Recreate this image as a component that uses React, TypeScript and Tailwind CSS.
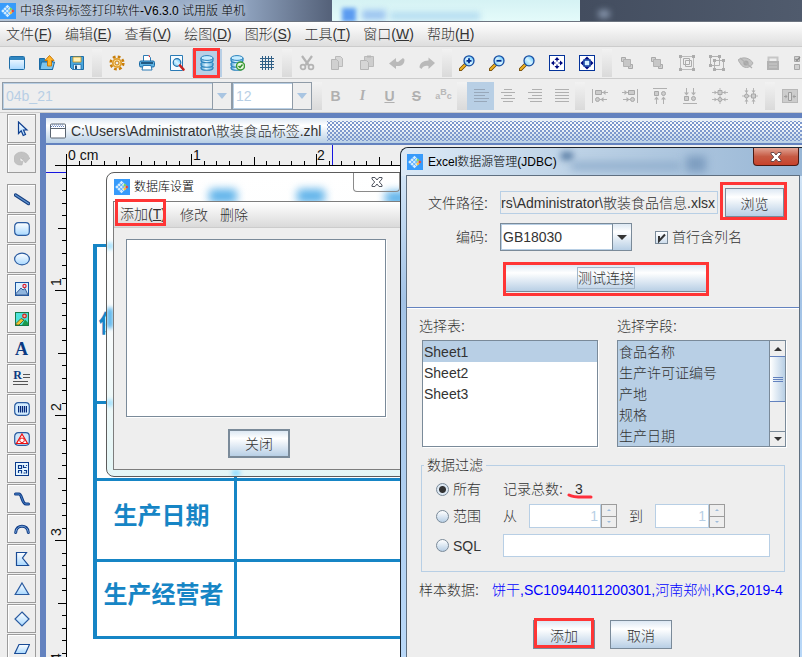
import React from 'react';
import clsx from 'clsx';

type IconProps = { children: React.ReactNode; className?: string };

const Icon = ({ children, className = 'h-4 w-4' }: IconProps) => (
  <svg viewBox="0 0 16 16" className={clsx('shrink-0', className)} fill="none" aria-hidden="true">
    {children}
  </svg>
);

const AppLogo = () => (
  <svg viewBox="0 0 16 16" className="h-4 w-4 shrink-0" aria-hidden="true">
    <rect width="16" height="16" fill="#379bfb" />
    <path d="M7.500 1.700 13.800 8l-6.300 6.300L1.200 8z" fill="#d6eeff" />
    <path
      d="m3.200 6 6.300 6.300M5.300 3.900l6.300 6.300M3.200 10l6.300-6.300M5.300 12.100l6.300-6.300"
      stroke="#379bfb"
      strokeWidth=".8"
    />
    <path d="m10.800 4.600 1.600 1.600-1.600 1.600-1.600-1.600z" fill="#7ed957" />
    <path d="m12.700 6.300 1.700 1.700-1.700 1.700L11 8z" fill="#e2453c" />
    <path d="m10.800 8.200 1.600 1.600-1.600 1.600-1.600-1.600z" fill="#ffc02e" />
  </svg>
);

const Defs = () => (
  <svg className="absolute h-0 w-0" aria-hidden="true">
    <defs>
      <linearGradient id="sky" x1="0" y1="0" x2="0" y2="1">
        <stop offset="0" stopColor="#ffffff" />
        <stop offset="1" stopColor="#a8d8ff" />
      </linearGradient>
      <linearGradient id="lens" x1="1" y1="0" x2="0" y2="1">
        <stop offset="0" stopColor="#37b6ff" />
        <stop offset=".5" stopColor="#d9f4ff" />
        <stop offset="1" stopColor="#58c0f5" />
      </linearGradient>
      <linearGradient id="disk" x1="0" y1="0" x2="1" y2="0">
        <stop offset="0" stopColor="#4a9ed2" />
        <stop offset=".4" stopColor="#e4f6ff" />
        <stop offset="1" stopColor="#5aaede" />
      </linearGradient>
    </defs>
  </svg>
);

const Cylinder = () => (
  <>
    <path d="M2 3v10c0 3.300 12 3.300 12 0V3" fill="url(#disk)" />
    <path
      d="M2 3v2.500c0 3 12 3 12 0V3M2 8v2c0 3 12 3 12 0V8M2 12v1c0 3 12 3 12 0v-1"
      stroke="#2a82bc"
      strokeWidth="1.200"
    />
    <ellipse cx="8" cy="3" rx="6" ry="2.400" fill="#c6ecff" stroke="#2a82bc" />
  </>
);

const Magnifier = ({ children }: { children?: React.ReactNode }) => (
  <Icon>
    <path d="m6.500 9.500-5 5" stroke="#6b4300" strokeWidth="3.600" strokeLinecap="round" />
    <path d="m6 10-4.300 4.300" stroke="#f0b323" strokeWidth="2" strokeLinecap="round" />
    <circle cx="10" cy="5.800" r="5" fill="url(#lens)" stroke="#1a4fa3" strokeWidth="1.300" />
    {children}
  </Icon>
);

const NewIcon = () => (
  <Icon>
    <rect x=".5" y="1.500" width="15" height="13" rx="1" fill="url(#sky)" stroke="#1f6ea8" />
    <path d="M1 2h14v3H1z" fill="#2f86c0" />
  </Icon>
);
const OpenIcon = () => (
  <Icon>
    <path d="M.5 3.500h5l1 2h7v9H.5z" fill="#2a86c0" stroke="#1a6aa5" />
    <path d="M2.500 7h13l-2 7.500H1z" fill="#7cc4ee" stroke="#1a6aa5" />
    <path d="M10.500.5 15 5.500h-2.500V11h-4V5.500H6z" fill="#ffb52b" stroke="#c97a0a" />
  </Icon>
);
const SaveIcon = () => (
  <Icon>
    <path d="M1.500 1.500h13v13h-11l-2-2z" fill="#4aa6dc" stroke="#1f6ea8" />
    <path d="M4 2h8v5H4z" fill="#fff1b8" stroke="#c9941d" strokeWidth=".8" />
    <path d="M4.500 9.500h7.500v5H4.500z" fill="#eaf6ff" stroke="#1f6ea8" strokeWidth=".8" />
    <path d="M6 10.500h2V14H6z" fill="#1f4e79" />
  </Icon>
);
const GearIcon = () => (
  <Icon>
    <circle cx="8" cy="8" r="6.300" stroke="#c77d0a" strokeWidth="2.600" strokeDasharray="2.700 2.250" />
    <circle cx="8" cy="8" r="4.200" fill="#ffe19a" stroke="#e0a030" strokeWidth="1.800" />
    <circle cx="8" cy="8" r="2" fill="#eee" stroke="#c77d0a" />
  </Icon>
);
const PrintIcon = () => (
  <Icon>
    <path d="M4.500 6V.5h5l2 2V6" fill="#fff" stroke="#2a7ab5" />
    <path d="M9 .5h2v2z" fill="#d22" />
    <rect x=".5" y="6" width="15" height="6" rx="1.500" fill="#5eb2e2" stroke="#1a6aa5" />
    <path d="M2 8h12" stroke="#103e66" strokeWidth="1.500" />
    <path d="M4 10.500h8l1 4.500H3z" fill="#fff" stroke="#2a7ab5" />
  </Icon>
);
const PreviewIcon = () => (
  <Icon>
    <path d="M1.500.5h12v15h-12z" fill="#f4fbff" stroke="#2a7ab5" />
    <circle cx="8" cy="7.500" r="3.800" fill="url(#lens)" stroke="#1f6ea8" strokeWidth="1.200" />
    <path d="m11 10.500 3.500 4" stroke="#c5221f" strokeWidth="2.600" strokeLinecap="round" />
  </Icon>
);
const DatabaseIcon = () => (
  <Icon>
    <Cylinder />
  </Icon>
);
const DatabaseOkIcon = () => (
  <Icon>
    <Cylinder />
    <circle cx="11.500" cy="11" r="4" fill="#e8f8e0" stroke="#3c9b35" strokeWidth="1.500" />
    <path d="m9.500 11 1.500 1.500 2.500-3" stroke="#2c8a27" strokeWidth="1.500" />
  </Icon>
);
const GridIcon = () => (
  <Icon>
    <path d="M3.500 1v14M6.500 1v14M9.500 1v14M12.500 1v14M1 3.500h14M1 6.500h14M1 9.500h14M1 12.500h14" stroke="#2f5f86" />
  </Icon>
);
const CutIcon = () => (
  <Icon>
    <path d="m3 1 6.500 9M13 1 6.500 10" stroke="#b4b4b4" strokeWidth="2.200" />
    <circle cx="4" cy="12" r="2.400" stroke="#b4b4b4" strokeWidth="1.800" />
    <circle cx="12" cy="12" r="2.400" stroke="#b4b4b4" strokeWidth="1.800" />
  </Icon>
);
const CopyIcon = () => (
  <Icon>
    <path d="M6.500 1.500h5l2 2v8h-7z" fill="#d6d6d6" stroke="#bababa" />
    <path d="M2.500 4.500h5l2 2v8h-7z" fill="#d0d0d0" stroke="#b6b6b6" />
  </Icon>
);
const PasteIcon = () => (
  <Icon>
    <path d="M5.500 1.500h9v10h-9z" fill="#cecece" stroke="#bababa" />
    <path d="M8 .5h4v2H8z" fill="#b6b6b6" />
    <path d="M1.500 5.500h6l2 2v7h-8z" fill="#d6d6d6" stroke="#b6b6b6" />
  </Icon>
);
const UndoIcon = () => (
  <Icon>
    <path d="M0 8.500 7 3v3.500l2 .5 5-4 1.500 1.500c0 5-3 7-8.500 6.500V14z" fill="#bababa" />
  </Icon>
);
const RedoIcon = () => (
  <Icon>
    <path d="M16 8 9.500 2.500v3C4 5.500.5 8.500.5 12.500l2 1.500c1.500-3 4-3.500 7-3v3z" fill="#bababa" />
  </Icon>
);
const ZoomInIcon = () => (
  <Magnifier>
    <path d="M7.500 5.800h5M10 3.300v5" stroke="#002a90" strokeWidth="1.800" />
  </Magnifier>
);
const ZoomOutIcon = () => (
  <Magnifier>
    <path d="M7.500 5.800h5" stroke="#002a90" strokeWidth="1.800" />
  </Magnifier>
);
const FitIcon = () => (
  <Icon>
    <rect x=".5" y=".5" width="15" height="15" fill="#fff" stroke="#04339a" />
    <path d="m8 2 2.500 3h-5zM8 14l2.500-3h-5zM2 8l3-2.500v5zM14 8l-3-2.500v5z" fill="#000a80" />
    <path d="M8 4v2.500M8 9.500V12M4 8h2.500M9.500 8H12" stroke="#000a80" strokeWidth="1.200" />
  </Icon>
);
const FitPageIcon = () => (
  <Icon>
    <rect x=".5" y=".5" width="15" height="15" fill="#fff" stroke="#04339a" />
    <path d="m8 1.500 3 3H5zM8 14.500l3-3H5zM1.500 8l3-3v6zM14.500 8l-3-3v6z" fill="#000a80" />
    <rect x="5" y="5" width="6" height="6" fill="#d7f1ff" stroke="#04339a" strokeWidth="1.400" />
  </Icon>
);
const FrontIcon = () => (
  <Icon>
    <path d="M2.500 2.500h4v4h-4zM9.500 9.500h4v4h-4z" fill="#d0d0d0" stroke="#a8a8a8" />
    <path d="M4.500 4.500h7v7h-7z" fill="#c6c6c6" stroke="#b2b2b2" />
  </Icon>
);
const GroupIcon = () => (
  <Icon>
    <path d="M1.500 1.500h13v13h-13z" stroke="#bcbcbc" />
    <path d="M4.500 3.500h6v6h-6zM6.500 5.500h6v6h-6z" fill="#eee" stroke="#acacac" />
    <path d="M0 0h3v3H0zM13 0h3v3h-3zM0 13h3v3H0zM13 13h3v3h-3z" fill="#acacac" />
  </Icon>
);
const UngroupIcon = () => (
  <Icon>
    <path d="M1.500 1.500h9v9h-9z M5.500 5.500h9v9h-9z" stroke="#b2b2b2" />
    <path d="M0 0h3v3H0zM9 0h3v3H9zM0 9h3v3H0zM4 4h3v3H4zM13 4h3v3h-3zM4 13h3v3H4zM13 13h3v3h-3z" fill="#acacac" />
  </Icon>
);
const EyeIcon = () => (
  <Icon>
    <path d="M0 5c5-4 12-2 15 3-3 6-10 6-13 0z" fill="#c4c4c4" stroke="#b0b0b0" />
    <circle cx="8" cy="8" r="2.600" fill="#a8a8a8" />
    <path d="m2 3 12 10" stroke="#b0b0b0" strokeWidth="1.200" />
  </Icon>
);
const LockIcon = () => (
  <Icon>
    <path d="M3.500 7V2.500h9V7" stroke="#c6c6c6" strokeWidth="2" />
    <path d="M2 6h12v9H2z" fill="#b2b2b2" />
    <path d="M4 9h8M4 12h8" stroke="#ccc" />
  </Icon>
);
const CheckListIcon = () => (
  <Icon>
    <path d="M2.500 1.500h5v5h-5zM2.500 9.500h5v5h-5z" fill="#d0d0d0" stroke="#a8a8a8" />
    <path d="m3.500 4 1.500 1.500L8 2" stroke="#888" strokeWidth="1.200" />
  </Icon>
);

type TextIconProps = { letter: string; className?: string };
const TextIcon = ({ letter, className }: TextIconProps) => (
  <span className={clsx('text-sm leading-4 text-[#b0b0b0]', className)}>{letter}</span>
);
const AbcIcon = () => (
  <span className="flex text-[9px] leading-4 font-bold text-[#b8b8b8]">
    <span>a</span>
    <span className="-mt-1">B</span>
    <span>c</span>
  </span>
);

const LinesIcon = ({ d, stroke = '#b0b0b0' }: { d: string; stroke?: string }) => (
  <Icon>
    <path d={d} stroke={stroke} strokeWidth="1.200" />
  </Icon>
);
const AlignLeftIcon = () => <LinesIcon stroke="#98a8ba" d="M1 1.500h11M1 4.500h15M1 7.500h11M1 10.500h15M1 13.500h13" />;
const AlignCenterIcon = () => <LinesIcon d="M4 1.500h8M1 4.500h14M4 7.500h8M1 10.500h14M3 13.500h10" />;
const AlignRightIcon = () => <LinesIcon d="M5 1.500h10M1 4.500h14M5 7.500h10M1 10.500h14M3 13.500h12" />;
const AlignJustifyIcon = () => <LinesIcon d="M1 1.500h14M1 4.500h14M1 7.500h14M1 10.500h14M1 13.500h14" />;

const ObjLeftIcon = () => (
  <Icon>
    <path d="M.5 1v14M10 4.500h6M8 11.500h7" stroke="#b0b0b0" />
    <path d="M3.500 2.500h6v4h-6z" fill="#ccc" stroke="#a8a8a8" />
    <circle cx="5.500" cy="11.500" r="2" fill="#ccc" stroke="#a8a8a8" />
    <path d="m10.500 4.500 3-2.500v5zM8.500 11.500l3-2.500v5z" fill="#b0b0b0" />
  </Icon>
);
const ObjRightIcon = () => (
  <Icon>
    <path d="M15.500 1v14M0 4.500h6M1 11.500h7" stroke="#b0b0b0" />
    <path d="M6.500 2.500h6v4h-6z" fill="#ccc" stroke="#a8a8a8" />
    <circle cx="10.500" cy="11.500" r="2" fill="#ccc" stroke="#a8a8a8" />
    <path d="M5.500 4.500l-3-2.500v5zM7.500 11.500l-3-2.500v5z" fill="#b0b0b0" />
  </Icon>
);
const ObjTopIcon = () => (
  <Icon>
    <path d="M1 .5h14M4.500 10v6M11.500 10v6" stroke="#b0b0b0" />
    <path d="M2.500 3.500h4v4h-4z" fill="#ccc" stroke="#a8a8a8" />
    <circle cx="11.500" cy="5.500" r="2" fill="#ccc" stroke="#a8a8a8" />
    <path d="m4.500 8.500 2.500 3H2zM11.500 8.500l2.500 3H9z" fill="#b0b0b0" />
  </Icon>
);
const ObjBottomIcon = () => (
  <Icon>
    <path d="M1 15.500h14M4.500 0v6M11.500 0v6" stroke="#b0b0b0" />
    <path d="M2.500 8.500h4v4h-4z" fill="#ccc" stroke="#a8a8a8" />
    <circle cx="11.500" cy="10.500" r="2" fill="#ccc" stroke="#a8a8a8" />
    <path d="m4.500 7.500 2.500-3H2zM11.500 7.500l2.500-3H9z" fill="#b0b0b0" />
  </Icon>
);
const ObjMiddleIcon = () => (
  <Icon>
    <path d="M8 0v16M0 4.500h16M0 11.500h16" stroke="#b8b8b8" />
    <path d="M6 2.500h4v4H6z" fill="#ccc" stroke="#a8a8a8" />
    <circle cx="8" cy="11.500" r="2" fill="#ccc" stroke="#a8a8a8" />
    <path d="M5 4.500 2.500 2.500v4zM11 4.500l2.500-2v4zM5 11.500l-2.500-2v4zM11 11.500l2.500-2v4z" fill="#b0b0b0" />
  </Icon>
);
const ObjCenterIcon = () => (
  <Icon>
    <path d="M0 8h16M4.500 0v16M11.500 0v16" stroke="#b8b8b8" />
    <path d="M9.500 6h4v4h-4z" fill="#ccc" stroke="#a8a8a8" />
    <circle cx="4.500" cy="8" r="2" fill="#ccc" stroke="#a8a8a8" />
    <path d="m4.500 5-2-2.500h4zM11.500 5l-2-2.500h4zM4.500 11l-2 2.500h4zM11.500 11l-2 2.500h4z" fill="#b0b0b0" />
  </Icon>
);
const DistributeIcon = () => (
  <Icon>
    <rect x=".5" y="1.500" width="15" height="13" fill="#cdcdcd" stroke="#b8b8b8" />
    <path d="M6.500 4.500h3v8h-3z" fill="#ddd" stroke="#9c9c9c" />
    <path d="M2 8.500h3M11 8.500h3" stroke="#a0a0a0" />
    <path d="m5.500 8.500-2-2v4zM10.500 8.500l2-2v4z" fill="#a0a0a0" />
  </Icon>
);

// left palette

const PointerIcon = () => (
  <Icon>
    <path d="M4.500 1v11.500l2.700-2.700 2 4.700 2.300-1-2-4.500h3.500z" fill="url(#sky)" stroke="#0f3f8f" strokeWidth="1.200" />
  </Icon>
);
const RotateIcon = () => (
  <Icon>
    <path
      d="M0 8a7.500 6.500 0 0 1 15-1h1l-4.500 5L7 7h2.500a2 2 0 0 0-3.500 1.500c0 1.500 1 2 3 2l-1 3.500C3 14.500 0 12 0 8z"
      fill="#c2c2c2"
      stroke="#b6b6b6"
      strokeWidth=".6"
    />
  </Icon>
);
const LineIcon = () => (
  <Icon>
    <path d="m1.500 4 13 8.500" stroke="#173f80" strokeWidth="3.400" strokeLinecap="round" />
    <path d="m1.500 4 13 8.500" stroke="#5f93cf" strokeWidth="1.400" strokeLinecap="round" />
  </Icon>
);
const RoundRectIcon = () => (
  <Icon>
    <rect x=".7" y="1.700" width="14.600" height="12.600" rx="3.500" fill="url(#sky)" stroke="#2a5ba0" strokeWidth="1.200" />
  </Icon>
);
const EllipseIcon = () => (
  <Icon>
    <ellipse cx="8" cy="8" rx="7.400" ry="5.800" fill="url(#sky)" stroke="#2a5ba0" strokeWidth="1.200" />
  </Icon>
);
const PictureIcon = () => (
  <Icon>
    <rect x="1.500" y="1.500" width="13" height="13" fill="#d9efff" stroke="#1a55a0" />
    <path d="M2 12.500 7 7l2 2 2-1.500 3 6.500H2z" fill="#8fb5de" stroke="#3b5f96" />
    <circle cx="10.500" cy="5" r="1.600" stroke="#d23" strokeWidth="1.200" />
  </Icon>
);
const PhotoIcon = () => (
  <Icon>
    <rect x="1.500" y="1.500" width="13" height="13" fill="#4ee3dc" stroke="#157a4a" />
    <path d="m8 14 3-5.500 3 3V14z" fill="#1d9a4a" />
    <path d="M2 12.500 7 7.500l3 1.500-5 5H2z" fill="#f6c231" stroke="#3d5a20" strokeWidth=".8" />
    <circle cx="10.500" cy="5" r="1.800" fill="#ffb09a" stroke="#c22" strokeWidth="1.200" />
  </Icon>
);
const LetterIcon = () => (
  <span className="font-['Liberation_Serif',serif] text-lg leading-4 font-bold text-[#0b3a82]">A</span>
);
const RichTextIcon = () => (
  <span className="flex flex-col">
    <span className="flex items-center gap-px">
      <span className="font-['Liberation_Serif',serif] text-xs leading-[9px] font-bold text-[#0b3a82]">R</span>
      <svg viewBox="0 0 7 8" className="h-2 w-[7px]" aria-hidden="true">
        <path d="M0 2.500h7M0 5.500h7" stroke="#555" />
      </svg>
    </span>
    <svg viewBox="0 0 16 6" className="h-1.5 w-4" aria-hidden="true">
      <path d="M0 1.500h15M0 4.500h15" stroke="#555" />
    </svg>
  </span>
);
const BarcodeIcon = () => (
  <Icon>
    <rect x=".7" y="1.700" width="14.600" height="12.600" rx="3.500" fill="#d3ecff" stroke="#2a5ba0" strokeWidth="1.200" />
    <path d="M4.500 5v6.500M8.500 5v6.500M12.500 5v6.500" stroke="#06287a" />
    <path d="M6.500 5v6.500M10.500 5v6.500" stroke="#06287a" strokeWidth="1.500" />
  </Icon>
);
const WarnShapeIcon = () => (
  <Icon>
    <rect x=".7" y="1.700" width="14.600" height="12.600" rx="3.500" fill="#cfe6fa" stroke="#2a5ba0" strokeWidth="1.200" />
    <path d="m8 3 5.500 9.500h-11z" fill="#fff" stroke="#e11" strokeWidth="1.200" />
    <circle cx="8" cy="9.300" r="2.300" stroke="#e11" />
  </Icon>
);
const QrIcon = () => (
  <Icon>
    <rect x="1.500" y="1.500" width="13" height="13" fill="#e3f4ff" stroke="#0a3a8c" />
    <path
      d="M4.500 4.500h3v3h-3zM4.500 10v2M7 9.500H4M7.500 9v3.500M9.500 4v2.500h3M10 9.500h3M12.500 9v3.500M9.500 12h2M12.500 4v1"
      stroke="#0a3a8c"
      strokeWidth="1.200"
    />
  </Icon>
);
const CurveIcon = () => (
  <Icon>
    <path d="M1.500 3h3.500c3 0 3 10 7 10h2.500" stroke="#0f3a85" strokeWidth="3" strokeLinecap="round" />
    <path d="M1.500 3h3.500c3 0 3 10 7 10h2.500" stroke="#4c86c9" strokeWidth="1" strokeLinecap="round" />
  </Icon>
);
const ArcIcon = () => (
  <Icon>
    <path d="M1.700 11.500C2 3 14 3 14.300 11.500" stroke="#0f3a85" strokeWidth="3" strokeLinecap="round" />
    <path d="M1.700 11.500C2 3 14 3 14.300 11.500" stroke="#7aabdf" strokeWidth="1" strokeLinecap="round" />
  </Icon>
);
const PolygonIcon = () => (
  <Icon>
    <path d="M2.500 1.500h10L8.500 7l6 7.500h-12z" fill="url(#sky)" stroke="#1a4c96" strokeWidth="1.200" />
  </Icon>
);
const TriangleIcon = () => (
  <Icon>
    <path d="m8 2 6.800 11.500H1.200z" fill="url(#sky)" stroke="#2a5ba0" strokeWidth="1.200" />
  </Icon>
);
const DiamondIcon = () => (
  <Icon>
    <path d="m8 1 7 7-7 7-7-7z" fill="url(#sky)" stroke="#2a5ba0" strokeWidth="1.200" />
  </Icon>
);
const ParallelogramIcon = () => (
  <Icon>
    <path d="M5 3.500h10.500l-4 9H.7z" fill="url(#sky)" stroke="#1a4c96" strokeWidth="1.200" />
  </Icon>
);

type Tool = { name: string; icon: React.ReactNode; w?: string; active?: boolean; marked?: boolean };

const fileTools: Tool[] = [
  { name: '新建', icon: <NewIcon /> },
  { name: '打开', icon: <OpenIcon /> },
  { name: '保存', icon: <SaveIcon /> },
];
const outputTools: Tool[] = [
  { name: '文档设置', icon: <GearIcon /> },
  { name: '打印', icon: <PrintIcon /> },
  { name: '打印预览', icon: <PreviewIcon /> },
  { name: '数据库设置', icon: <DatabaseIcon />, active: true, marked: true },
  { name: '刷新数据', icon: <DatabaseOkIcon /> },
  { name: '网格', icon: <GridIcon /> },
];
const editTools: Tool[] = [
  { name: '剪切', icon: <CutIcon /> },
  { name: '复制', icon: <CopyIcon /> },
  { name: '粘贴', icon: <PasteIcon /> },
  { name: '撤销', icon: <UndoIcon /> },
  { name: '重做', icon: <RedoIcon /> },
];
const zoomTools: Tool[] = [
  { name: '放大', icon: <ZoomInIcon /> },
  { name: '缩小', icon: <ZoomOutIcon /> },
  { name: '实际大小', icon: <Magnifier /> },
  { name: '适合窗口', icon: <FitIcon /> },
  { name: '适合页面', icon: <FitPageIcon /> },
];
const arrangeTools: Tool[] = [
  { name: '置前', icon: <FrontIcon /> },
  { name: '置后', icon: <FrontIcon /> },
  { name: '组合', icon: <GroupIcon /> },
  { name: '取消组合', icon: <UngroupIcon /> },
  { name: '隐藏', icon: <EyeIcon />, w: 'w-[27px]' },
  { name: '锁定', icon: <LockIcon />, w: 'w-[27px]' },
  { name: '选择', icon: <CheckListIcon />, w: 'w-[27px]' },
];
const fontTools: Tool[] = [
  { name: '粗体', icon: <TextIcon letter="B" className="font-bold" />, w: 'w-[27px]' },
  { name: '斜体', icon: <TextIcon letter="I" className="font-['Liberation_Serif',serif] font-bold italic" />, w: 'w-[27px]' },
  { name: '下划线', icon: <TextIcon letter="U" className="font-bold underline" />, w: 'w-[27px]' },
  { name: '删除线', icon: <TextIcon letter="S" className="font-bold line-through" />, w: 'w-[27px]' },
  { name: '字符间距', icon: <AbcIcon />, w: 'w-[27px]' },
];
const textAlignTools: Tool[] = [
  { name: '左对齐', icon: <AlignLeftIcon />, w: 'w-[27px]', active: true },
  { name: '居中', icon: <AlignCenterIcon />, w: 'w-[27px]' },
  { name: '右对齐', icon: <AlignRightIcon />, w: 'w-[27px]' },
  { name: '两端对齐', icon: <AlignJustifyIcon />, w: 'w-[27px]' },
];
const objectAlignTools: Tool[] = [
  { name: '左边对齐', icon: <ObjLeftIcon /> },
  { name: '右边对齐', icon: <ObjRightIcon /> },
  { name: '顶部对齐', icon: <ObjTopIcon /> },
  { name: '底部对齐', icon: <ObjBottomIcon /> },
  { name: '水平居中', icon: <ObjMiddleIcon /> },
  { name: '垂直居中', icon: <ObjCenterIcon /> },
];
const distributeTools: Tool[] = [{ name: '等间距', icon: <DistributeIcon /> }];

const selectTools: Tool[] = [
  { name: '选取', icon: <PointerIcon /> },
  { name: '旋转', icon: <RotateIcon /> },
];
const drawTools: Tool[] = [
  { name: '直线', icon: <LineIcon /> },
  { name: '圆角矩形', icon: <RoundRectIcon /> },
  { name: '椭圆', icon: <EllipseIcon /> },
  { name: '图片', icon: <PictureIcon /> },
  { name: '照片', icon: <PhotoIcon /> },
  { name: '普通文本', icon: <LetterIcon /> },
  { name: '富文本', icon: <RichTextIcon /> },
  { name: '一维条码', icon: <BarcodeIcon /> },
  { name: '矢量图', icon: <WarnShapeIcon /> },
  { name: '二维码', icon: <QrIcon /> },
  { name: '曲线', icon: <CurveIcon /> },
  { name: '弧线', icon: <ArcIcon /> },
  { name: '多边形', icon: <PolygonIcon /> },
  { name: '三角形', icon: <TriangleIcon /> },
  { name: '菱形', icon: <DiamondIcon /> },
  { name: '平行四边形', icon: <ParallelogramIcon /> },
];

const ToolGroup = ({ tools }: { tools: Tool[] }) => (
  <div className="flex h-7 shrink-0">
    {tools.map((tool) => (
      <button
        key={tool.name}
        aria-label={tool.name}
        className={clsx(
          'relative flex h-7 items-center justify-center',
          tool.w ?? 'w-[30px]',
          tool.active && 'bg-[#b8cfe5]',
        )}
      >
        {tool.icon}
        {tool.marked && <span className="absolute -inset-y-px right-0.5 left-px border-3 border-[#ff3535]" />}
      </button>
    ))}
  </div>
);

const Separator = () => <div className="h-7 w-2.5 shrink-0 bg-linear-to-b from-[#f2f2f2] to-[#dadada]" />;

const menus = [
  ['文件', 'F'],
  ['编辑', 'E'],
  ['查看', 'V'],
  ['绘图', 'D'],
  ['图形', 'S'],
  ['工具', 'T'],
  ['窗口', 'W'],
  ['帮助', 'H'],
];

const DisabledCombo = ({ label, value, className }: { label: string; value: string; className: string }) => (
  <div className={clsx('relative h-7 shrink-0 border border-[#8f9ba7]', className)}>
    <select
      aria-label={label}
      disabled
      className="h-full w-full appearance-none border border-[#b8cfe5] bg-transparent px-0.5 text-sm text-[#b8cfe5] disabled:opacity-100"
    >
      <option>{value}</option>
    </select>
    <span className="pointer-events-none absolute inset-y-0 right-0 flex w-[19px] items-center justify-center border-l border-[#8f9ba7] bg-[#eeeeee]">
      <svg viewBox="0 0 10 6" className="h-1.5 w-2.5" aria-hidden="true">
        <path d="M0 0h10L5 6z" fill="#a9c5e2" />
      </svg>
    </span>
  </div>
);

const PaletteButton = ({ tool }: { tool: Tool }) => (
  <button
    aria-label={tool.name}
    className="flex h-[29px] w-[29px] shrink-0 items-center justify-center border border-[#9c9c9c] shadow-[inset_1px_1px_0_#fff]"
  >
    {tool.icon}
  </button>
);

const tickLength = (i: number) => (i % 10 === 0 ? 11 : i % 5 === 0 ? 8 : 4);

const HorizontalRuler = () => (
  <svg className="block h-[21px] w-full shrink-0" shapeRendering="crispEdges" aria-hidden="true">
    {Array.from({ length: 60 }, (_, i) => {
      const x = Math.round(i * 12.5) + 20.5;
      return <path key={i} d={`M${x} 20V${20 - tickLength(i)}`} stroke="#000" />;
    })}
    <path d="M9 20.500h900" stroke="#000" />
    <path d="M286.500 0v20" stroke="#1515e0" />
    <text x="22" y="15" fontSize="14" fill="#111">0 cm</text>
    <text x="147" y="15" fontSize="14" fill="#111">1</text>
    <text x="271" y="15" fontSize="14" fill="#111">2</text>
  </svg>
);

const VerticalRuler = () => (
  <svg className="block h-full w-[21px] shrink-0" shapeRendering="crispEdges" aria-hidden="true">
    {Array.from({ length: 50 }, (_, i) => {
      const y = Math.round(i * 12.5) - 0.5;
      return <path key={i} d={`M20 ${y}h${-tickLength(i)}`} stroke="#000" />;
    })}
    <path d="M20.500 0v900" stroke="#000" />
    <path d="M0 6.500h20" stroke="#1515e0" />
    {[1, 2, 3, 4].map((n) => (
      <text key={n} fontSize="14" fill="#111" transform={`translate(15 ${n * 125 - 5}) rotate(-90)`}>
        {n}
      </text>
    ))}
  </svg>
);

const labelRows = [
  { text: '保', className: 'h-[154px] pr-[110px]' },
  { text: '', className: 'h-[74px]' },
  { text: '生产日期', className: 'h-[78px] pr-2 pb-2' },
  { text: '生产经营者', className: 'h-[74px] pr-1 pb-2' },
];

const LabelCanvas = () => (
  <div className="min-w-0 flex-1 overflow-hidden bg-white pt-[78px] pl-[26px]">
    <div className="w-[460px] border-t-3 border-l-4 border-[#1685c5] text-2xl font-bold text-[#1685c5]">
      {labelRows.map((row, i) => (
        <div key={i} className="flex border-b-3 border-[#1685c5]">
          <div
            className={clsx(
              'flex w-[140px] items-center justify-center border-r-3 border-[#1685c5] whitespace-nowrap',
              row.className,
            )}
          >
            {row.text}
          </div>
        </div>
      ))}
    </div>
  </div>
);

const metal = 'bg-linear-to-b from-[#dde8f3] via-white via-30% to-[#b8cfe5]';

const DatabaseDialog = () => (
  <section className="absolute top-[172px] left-[106px] w-[400px] rounded-lg border border-[#5c5c5c] bg-linear-to-b from-white via-[#fafcfc] to-[#e4f6f6] px-1.5 pb-1.5">
    <div className="absolute inset-0 overflow-hidden rounded-lg">
      <i className="absolute top-4 left-[102px] h-3.5 w-7 rounded bg-[#5fb3ea] blur-[4px]" />
      <i className="absolute top-4 left-[190px] h-3.5 w-7 rounded bg-[#5fb3ea] blur-[4px]" />
      <i className="absolute top-[18px] left-[278px] h-3.5 w-8 rounded bg-[#5fb3ea] blur-[4px]" />
      <i className="absolute top-[70px] left-0 h-1.5 w-1.5 bg-[#8fdcff] blur-[2px]" />
      <i className="absolute top-[135px] left-0 h-5 w-1.5 bg-[#4fb0ea] blur-[2px]" />
      <i className="absolute top-[227px] left-0 h-1.5 w-1.5 bg-[#8fdcff] blur-[2px]" />
      <i className="absolute bottom-0 left-[125px] h-1.5 w-2 bg-[#8fdcff] blur-[2px]" />
    </div>
    <header className="relative flex h-7 items-center gap-1 pl-px">
      <AppLogo />
      <h2 className="text-xs text-black">数据库设置</h2>
      <button
        aria-label="关闭窗口"
        className="absolute top-0 right-[99px] flex h-[19px] w-[47px] items-center justify-center rounded-b border border-t-0 border-[#8a8a8a]"
      >
        <svg viewBox="0 0 12 10" className="h-2.5 w-3" fill="none" aria-hidden="true">
          <path d="M1 .5h3l2 2.500L8 .5h3v1.500L8.300 5 11 8v1.500H8L6 7 4 9.500H1V8l2.700-3L1 2z" fill="#fff" stroke="#505560" />
        </svg>
      </button>
    </header>
    <div className="relative border border-[#7d7d7d] bg-[#eeeeee]">
      <nav className="flex h-[26px] items-center border-b border-[#cccccc] bg-linear-to-b from-white to-[#dadada]">
        <button className="-mt-1 ml-px h-[27px] w-[51px] overflow-hidden border-3 border-[#ff3535] pt-0.5 pl-0.5 text-left whitespace-nowrap">
          添加(<u>T</u>)
        </button>
        <button className="ml-3.5">修改</button>
        <button className="ml-3">删除</button>
      </nav>
      <div className="mt-[11px] ml-3 h-[178px] w-[260px] border border-[#7a8a99] bg-white shadow-[1px_1px_0_#fff]" />
      <div className="mt-3 mb-[11px] ml-[114px]">
        <button className={clsx('h-[29px] w-[62px] border-2 border-[#7a8a99]', metal)}>关闭</button>
      </div>
    </div>
  </section>
);

const sheets = ['Sheet1', 'Sheet2', 'Sheet3'];
const fields = ['食品名称', '生产许可证编号', '产地', '规格', '生产日期'];

const Arrow = ({ up, small, className }: { up?: boolean; small?: boolean; className: string }) => (
  <svg viewBox="0 0 10 5" className={clsx(small ? 'h-0.5 w-1' : 'h-1 w-2', className)} aria-hidden="true">
    <path d={up ? 'M0 5h10L5 0z' : 'M0 0h10L5 5z'} fill="currentColor" />
  </svg>
);

const Radio = ({ id, label, defaultChecked }: { id: string; label: string; defaultChecked?: boolean }) => (
  <span className="flex w-[67px] items-center gap-1">
    <input
      type="radio"
      id={id}
      name="filter"
      defaultChecked={defaultChecked}
      className="h-[13px] w-[13px] appearance-none rounded-full border border-[#7a8a99] bg-linear-to-b from-white to-[#b8cfe5] checked:bg-[radial-gradient(circle,#333_0_3px,#dde8f3_4px)]"
    />
    <label htmlFor={id}>{label}</label>
  </span>
);

const Spinner = ({ id, className }: { id: string; className: string }) => (
  <span className={clsx('flex h-6', className)}>
    <input
      id={id}
      disabled
      defaultValue="1"
      className="h-full min-w-0 flex-1 border border-[#b8cfe5] bg-white px-0.5 text-right text-[#b8cfe5]"
    />
    <span className="flex w-4 flex-col border border-[#9c9c9c]">
      <button disabled aria-label="增加" className="flex flex-1 items-center justify-center border-b border-[#9c9c9c]">
        <Arrow up small className="text-[#9dbbdb]" />
      </button>
      <button disabled aria-label="减少" className="flex flex-1 items-center justify-center">
        <Arrow small className="text-[#9dbbdb]" />
      </button>
    </span>
  </span>
);

const DataSourceDialog = () => (
  <section className="absolute top-[147px] right-0 bottom-0 left-[400px] flex flex-col rounded-tl-lg border-t border-l border-[#1c2530] bg-linear-to-b from-[#dcecfa] via-[#a3c3e6] via-30% to-[#b9d8f8]">
    <div className="absolute inset-x-0 top-0 h-7 overflow-hidden rounded-tl-lg bg-linear-to-r from-[#dbe9f6] via-[#b9cfe4] to-[#98b6d5]">
      <i className="absolute top-1 left-[160px] h-2 w-3 bg-[#5c7fa6] blur-[3px]" />
      <i className="absolute top-3.5 left-[170px] h-2 w-[110px] bg-[#8fadcc] blur-[4px]" />
      <i className="absolute top-2 left-[285px] h-4 w-5 bg-[#7d9dc0] blur-[4px]" />
    </div>
    <header className="relative flex h-[27px] shrink-0 items-center gap-[5px] pl-1.5">
      <AppLogo />
      <h2 className="text-xs text-black">Excel数据源管理(JDBC)</h2>
      <button
        aria-label="关闭窗口"
        className="absolute top-0 right-[3px] flex h-[18px] w-[46px] items-center justify-center rounded-b border border-t-0 border-[#4b1a14] bg-linear-to-b from-[#e0a293] via-[#c65a43] via-50% to-[#c8412b]"
      >
        <svg viewBox="0 0 12 10" className="h-2.5 w-3" fill="none" aria-hidden="true">
          <path d="M1 .5h3l2 2.500L8 .5h3v1.500L8.300 5 11 8v1.500H8L6 7 4 9.500H1V8l2.700-3L1 2z" fill="#fff" stroke="#6b4a4a" />
        </svg>
      </button>
    </header>
    <div className="relative mr-0.5 ml-[5px] flex flex-1 flex-col border border-b-0 border-[#5f6f80] bg-[#eeeeee]">
      <div className="border-b border-[#6382bf] pb-[11px] shadow-[0_1px_0_#fff]">
        <div className="mt-1.5 mr-3 flex items-center">
          <label htmlFor="path" className="mt-1 w-[81px] shrink-0 text-right">文件路径:</label>
          <div className="mt-0.5 ml-3 flex h-[23px] min-w-0 flex-1 justify-end overflow-hidden border border-[#b8cfe5]">
            <input
              id="path"
              readOnly
              value="C:\Users\Administrator\散装食品信息.xlsx"
              className="w-[300px] shrink-0 pt-px pr-0.5 text-right"
            />
          </div>
          <div className="ml-0.5 h-[38px] w-[67px] shrink-0 border-3 border-[#ff3535] pt-[3px] pl-0.5">
            <button className={clsx('h-[29px] w-full border border-[#7a8a99] pt-0.5', metal)}>浏览</button>
          </div>
        </div>
        <div className="mt-[3px] flex items-center">
          <label htmlFor="encoding" className="w-[81px] shrink-0 text-right">编码:</label>
          <div className="relative ml-3 h-7 w-[132px] border border-[#7a8a99]">
            <select id="encoding" className="h-full w-full appearance-none border border-[#b8cfe5] bg-white pl-px">
              <option>GB18030</option>
            </select>
            <span
              className={clsx(
                'pointer-events-none absolute inset-y-0 right-0 flex w-[19px] items-center justify-center border-l border-[#7a8a99]',
                metal,
              )}
            >
              <svg viewBox="0 0 10 5" className="h-[5px] w-2.5 text-[#333]" aria-hidden="true">
                <path d="M0 0h10L5 5z" fill="currentColor" />
              </svg>
            </span>
          </div>
          <span className="relative ml-[23px] flex items-center">
            <input
              type="checkbox"
              id="header"
              defaultChecked
              className="peer h-[13px] w-[13px] appearance-none border border-[#7a8a99] bg-linear-to-b from-white to-[#cfdeed]"
            />
            <svg
              viewBox="0 0 13 13"
              className="pointer-events-none absolute left-0 hidden h-[13px] w-[13px] peer-checked:block"
              fill="none"
              aria-hidden="true"
            >
              <path d="M4 5v5l6-6.500" stroke="#333" strokeWidth="2" />
            </svg>
            <label htmlFor="header" className="ml-1">首行含列名</label>
          </span>
        </div>
        <div className="mt-[11px] ml-24 h-[34px] w-[206px] border-3 border-[#ff3535]">
          <button className={clsx('flex h-[27px] w-full items-center justify-center border-b border-[#7a8a99]', metal)}>
            <span className="border border-[#a3b8cc]">测试连接</span>
          </button>
        </div>
      </div>

      <div className="mt-2 mr-[13px] ml-3 flex gap-[19px]">
        <div className="w-[179px]">
          <div id="sheets-label">选择表:</div>
          <ul
            role="listbox"
            aria-labelledby="sheets-label"
            className="mt-1 ml-[3px] h-[107px] border border-[#7a8a99] bg-white shadow-[1px_1px_0_#fff]"
          >
            {sheets.map((name, i) => (
              <li
                key={name}
                role="option"
                aria-selected={i === 0}
                className={clsx('h-[21px] px-px leading-[23px]', i === 0 && 'bg-[#b8cfe5]')}
              >
                {name}
              </li>
            ))}
          </ul>
        </div>
        <div className="flex-1">
          <div id="fields-label">选择字段:</div>
          <div className="mt-1 flex h-[107px] border border-[#7a8a99] bg-[#b8cfe5] shadow-[1px_1px_0_#fff]">
            <ul role="listbox" aria-labelledby="fields-label" aria-multiselectable className="flex-1">
              {fields.map((name) => (
                <li key={name} role="option" aria-selected className="h-[21px] px-px leading-[23px]">
                  {name}
                </li>
              ))}
            </ul>
            <div className="flex w-4 flex-col border-l border-[#7a8a99] bg-[#eeeeee]">
              <button aria-label="向上滚动" className="flex h-[15px] items-center justify-center">
                <Arrow up className="text-[#333]" />
              </button>
              <div className="flex h-[46px] flex-col items-center justify-center gap-px border-y border-[#6382bf] bg-linear-to-r from-white to-[#b8cfe5]">
                <span className="h-px w-2.5 bg-[#6382bf]" />
                <span className="h-px w-2.5 bg-[#6382bf]" />
                <span className="h-px w-2.5 bg-[#6382bf]" />
              </div>
              <button
                aria-label="向下滚动"
                className="mt-auto flex h-[15px] items-center justify-center border-t border-[#7a8a99]"
              >
                <Arrow className="text-[#333]" />
              </button>
            </div>
          </div>
        </div>
      </div>

      <fieldset className="mt-2 mr-3.5 ml-3.5 border border-[#b8cfe5] pt-1 pb-3.5 pl-3.5">
        <legend className="-ml-3 px-[3px]">数据过滤</legend>
        <div className="flex h-5 items-center">
          <Radio id="all" label="所有" defaultChecked />
          <span>记录总数:</span>
          <span className="relative ml-3">
            3
            <svg viewBox="0 0 26 6" className="absolute top-3.5 -left-2 h-1.5 w-[26px]" fill="none" aria-hidden="true">
              <path d="M2 2c5 3 14 2 22 2" stroke="#ff2f3c" strokeWidth="3" strokeLinecap="round" />
            </svg>
          </span>
        </div>
        <div className="mt-[5px] flex items-center">
          <Radio id="range" label="范围" />
          <label htmlFor="from" className="mr-3">从</label>
          <Spinner id="from" className="w-[88px]" />
          <label htmlFor="to" className="mx-3">到</label>
          <Spinner id="to" className="w-[70px]" />
        </div>
        <div className="mt-1.5 flex items-center">
          <Radio id="sql" label="SQL" />
          <input aria-label="SQL" className="mr-3.5 h-[23px] min-w-0 flex-1 border border-[#b8cfe5] bg-white px-1" />
        </div>
      </fieldset>

      <div className="mt-2 ml-3 flex whitespace-nowrap">
        <span className="w-[73px] shrink-0">样本数据:</span>
        <span className="text-[#0000ff]">饼干,SC10944011200301,河南郑州,KG,2019-4</span>
      </div>

      <div className="mt-5 mr-px flex justify-center gap-[15px]">
        <button className={clsx('relative h-[29px] w-[62px] border border-[#7a8a99] pt-0.5', metal)}>
          添加
          <span className="absolute inset-x-0 -top-[3px] bottom-0 border-3 border-[#ff3535]" />
        </button>
        <button className={clsx('h-[29px] w-[62px] border border-[#7a8a99] pt-0.5', metal)}>取消</button>
      </div>
    </div>
  </section>
);

export default function App() {
  return (
    <div className="relative flex h-screen flex-col overflow-hidden bg-[#eeeeee] font-['Liberation_Sans','Noto_Sans_CJK_SC',sans-serif] text-sm leading-5 font-light text-[#333]">
      <Defs />
      <header className="relative flex h-[22px] shrink-0 items-center gap-1 overflow-hidden border-b border-[#6c7480] bg-linear-to-r from-[#b3c4d8] via-[#92a6c2] via-30% to-[#56637b] to-41%">
        <div className="absolute inset-y-0 left-[332px] w-[248px] bg-linear-to-b from-[#d5f2f4] to-[#e4fbfa]">
          <i className="absolute top-2 left-2.5 h-3.5 w-3.5 bg-[#5b9bf0] blur-[2px]" />
          <i className="absolute top-2.5 left-[30px] h-2.5 w-6 bg-[#9cc4f0] blur-[3px]" />
          <i className="absolute top-3 left-[58px] h-2 w-[90px] bg-[#b4dcf0] blur-[3px]" />
        </div>
        <div className="absolute inset-y-0 right-0 left-[580px] bg-linear-to-r from-[#434d5f] to-[#505b6d]">
          <i className="absolute top-2.5 left-[18px] h-2 w-3 rounded-full bg-[#8796ac] blur-[3px]" />
        </div>
        <AppLogo />
        <h1 className="relative text-xs text-black [text-shadow:0_0_6px_#fff]">中琅条码标签打印软件-V6.3.0 试用版 单机</h1>
      </header>

      <nav className="flex h-[25px] shrink-0 items-center gap-[13px] border-b border-[#cccccc] bg-linear-to-b from-white to-[#dedede] pl-1.5">
        {menus.map(([name, key]) => (
          <button key={name}>
            {name}(<u>{key}</u>)
          </button>
        ))}
      </nav>

      <div className="flex h-8 shrink-0 items-center overflow-hidden border-b border-[#cccccc] pl-0.5">
        <ToolGroup tools={fileTools} />
        <Separator />
        <ToolGroup tools={outputTools} />
        <Separator />
        <ToolGroup tools={editTools} />
        <Separator />
        <ToolGroup tools={zoomTools} />
        <Separator />
        <ToolGroup tools={arrangeTools} />
      </div>
      <div className="flex h-[34px] shrink-0 items-center overflow-hidden border-b border-[#cccccc] pl-0.5">
        <DisabledCombo label="字体" value="04b_21" className="w-[230px]" />
        <DisabledCombo label="字号" value="12" className="w-20 bg-white" />
        <Separator />
        <ToolGroup tools={fontTools} />
        <Separator />
        <ToolGroup tools={textAlignTools} />
        <Separator />
        <ToolGroup tools={objectAlignTools} />
        <Separator />
        <ToolGroup tools={distributeTools} />
      </div>

      <main className="flex min-h-0 flex-1">
        <aside className="flex w-10 shrink-0 flex-col gap-px overflow-hidden pt-px pl-[7px]">
          {selectTools.map((tool) => (
            <PaletteButton key={tool.name} tool={tool} />
          ))}
          <div className="h-[9px] shrink-0" />
          {drawTools.map((tool) => (
            <PaletteButton key={tool.name} tool={tool} />
          ))}
        </aside>
        <div className="flex min-w-0 flex-1 flex-col border-t-5 border-l-6 border-[#6382bf]">
          <div className="flex h-[27px] shrink-0 items-center gap-1.5 border-b-2 border-[#6382bf] bg-linear-to-b from-[#dde8f3] via-white via-30% to-[#b8cfe5] pl-1">
            <Icon>
              <rect x=".5" y="1" width="15" height="14" rx="1" fill="#fff" stroke="#5a6470" />
              <path d="M1 3.500h14M2 2h12" stroke="#6382bf" strokeDasharray="1 1" />
              <path d="M1 5.500h14" stroke="#5a6470" />
            </Icon>
            <span className="-ml-px shrink-0">C:\Users\Administrator\散装食品标签.zhl</span>
            <div className="h-5 flex-1 bg-[radial-gradient(#7d98cc_25%,transparent_30%),radial-gradient(#7d98cc_25%,transparent_30%)] [background-position:0_0,2px_2px] [background-size:4px_4px]" />
          </div>
          <HorizontalRuler />
          <div className="flex min-h-0 flex-1">
            <VerticalRuler />
            <LabelCanvas />
          </div>
        </div>
      </main>

      <DatabaseDialog />
      <DataSourceDialog />
    </div>
  );
}
